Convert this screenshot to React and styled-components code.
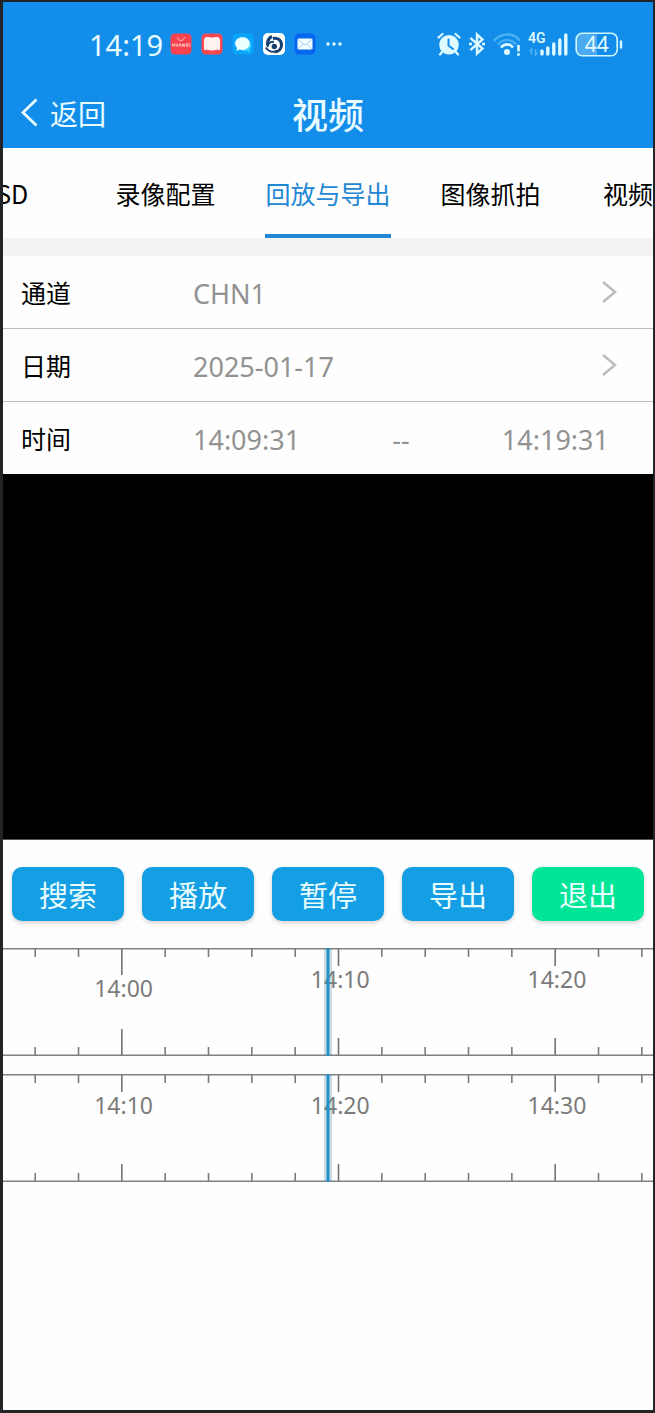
import React from "react";
import styled, { createGlobalStyle } from "styled-components";

const GlobalStyle = createGlobalStyle`
  * { box-sizing: border-box; }
  html, body, #root { height: 100%; }
  body {
    margin: 0;
    background: #222427;
    font-family: "Noto Sans", "Noto Sans CJK SC", sans-serif;
    color: #000;
  }
  button { font: inherit; color: inherit; border: 0; background: none; padding: 0; cursor: pointer; }
`;

const cjk = `"Noto Sans CJK SC", sans-serif`;

const Frame = styled.div`
  min-height: 100%;
  display: flex;
  flex-direction: column;
  padding: 2px 2px 3px 3px;
`;

const Screen = styled.div`
  flex: 1;
  background: #fefefe;
  overflow: hidden;
`;

const Header = styled.header`
  background: #128eea;
  color: #e9fbff;
`;

const StatusBar = styled.div`
  display: flex;
  align-items: center;
  justify-content: space-between;
  height: 84px;
  padding: 0 30px 0 86px;
`;

const StatusGroup = styled.div`
  display: flex;
  align-items: center;
  gap: ${(p) => p.$gap}px;
`;

const Clock = styled.span`
  margin-right: -2px;
  padding-top: 2px;
  font-size: 29px;
  line-height: 40px;
`;

const NavBar = styled.div`
  display: grid;
  grid-template-columns: 1fr auto 1fr;
  align-items: center;
  height: 62px;
  padding: 0 16px 8px;
  font-family: ${cjk};
`;

const BackButton = styled.button`
  display: flex;
  align-items: center;
  gap: 12px;
  font-size: 28px;
  line-height: 40px;
`;

const Title = styled.h1`
  margin: 0;
  font-size: 36px;
  line-height: 52px;
  font-weight: 500;
`;

const Tabs = styled.nav`
  display: grid;
  grid-template-columns: repeat(5, 25%);
  margin-left: -12.5%;
  width: 100%;
  height: 90px;
`;

const Tab = styled.button`
  display: flex;
  justify-content: ${(p) => (p.$cut ? "flex-end" : "center")};
  padding-right: ${(p) => (p.$cut ? "50%" : "0")};
  font-family: ${cjk};
  font-size: 25px;
  color: ${(p) => (p.$active ? "#1f87d3" : "#000")};
  white-space: nowrap;

  span {
    height: 90px;
    line-height: 90px;
    border-bottom: 4px solid ${(p) => (p.$active ? "#1f87d3" : "transparent")};
  }
`;

const Settings = styled.section`
  border-top: 18px solid #f3f3f3;
`;

const Row = styled.div`
  display: flex;
  align-items: center;
  height: ${(p) => (p.$last ? 72 : 73)}px;
  padding: 0 36px 0 18px;
  border-bottom: ${(p) => (p.$last ? "0" : "1px solid #bdbdbd")};
`;

const RowLabel = styled.span`
  width: 172px;
  font-family: ${cjk};
  font-size: 25px;
  line-height: 36px;
`;

const Value = styled.span`
  padding-top: 3px;
`;

const RowValue = styled.button`
  flex: 1;
  display: flex;
  align-items: center;
  justify-content: space-between;
  font-size: 27px;
  line-height: 38px;
  color: #929292;
`;

const TimeRange = styled.div`
  flex: 1;
  display: flex;
  align-items: center;
  justify-content: space-between;
  margin-right: 8px;
  padding-top: 3px;
  font-size: 27px;
  line-height: 38px;
  color: #929292;
`;

const Video = styled.div`
  height: 366px;
  background: #000;
  border-bottom: 1px solid #555;
`;

const Actions = styled.div`
  display: grid;
  grid-template-columns: repeat(5, 1fr);
  gap: 18px;
  padding: 27px 9px;
`;

const ActionButton = styled.button`
  height: 54px;
  border-radius: 10px;
  font-family: ${cjk};
  font-size: 29px;
  line-height: 54px;
  color: #e9fdff;
  background: ${(p) => (p.$exit ? "#00e696" : "#149fe4")};
  box-shadow: 0 2px 4px rgba(0, 0, 0, 0.18);
`;

const Timelines = styled.div`
  display: flex;
  flex-direction: column;
  gap: 18px;
`;

const Ruler = styled.svg`
  display: block;
  width: 100%;
  height: 108px;
  font-size: 23px;
  fill: #7b7b7b;
`;

function Timeline({ labels, tall }) {
  const ticks = Array.from({ length: 15 }, (_, i) => i);
  return (
    <Ruler role="img" aria-label={labels.join(" ")}>
      <rect x="0" y="0" width="100%" height="1.5" fill="#808080" />
      <rect x="0" y="106.5" width="100%" height="1.5" fill="#808080" />
      {ticks.map((i) => {
        const major = i % 5 === 2;
        const len = major ? (tall && i === 2 ? 26 : 17) : 8;
        const x = `${4.95 + (i * 100) / 15}%`;
        return (
          <g key={i} stroke={major ? "#737373" : "#7b7b7b"} strokeWidth="1.6">
            <line x1={x} x2={x} y1="1" y2={1 + len} />
            <line x1={x} x2={x} y1={107 - len} y2="107" />
          </g>
        );
      })}
      {labels.map((label, i) => (
        <text key={label} x={`${18.55 + (i * 100) / 3}%`} y={tall && i === 0 ? 49 : 40} textAnchor="middle">
          {label}
        </text>
      ))}
      <line x1="50%" x2="50%" y1="0" y2="108" stroke="#4a8fa8" strokeOpacity="0.3" strokeWidth="8" />
      <line x1="50%" x2="50%" y1="0" y2="108" stroke="#2491c8" strokeWidth="3" />
    </Ruler>
  );
}

const Chevron = () => (
  <svg width="16" height="24" viewBox="0 0 16 24" fill="none" stroke="#bcbcbc" strokeWidth="2.5" aria-hidden="true">
    <path d="M2 2l12 10L2 22" />
  </svg>
);

const StoreIcon = () => (
  <svg width="22" height="22" viewBox="0 0 22 22" aria-hidden="true">
    <rect x="0.5" y="0.5" width="21" height="21" rx="4.5" fill="#f8434e" />
    <path d="M7.5 4.2c.5 4.4 6.5 4.4 7 0" fill="none" stroke="#ffc5c2" strokeWidth="1" />
    <path d="M2.5 10.500v3M4.300 10.500v3M2.500 12h2M6 10.500v2.500h1.700v-2.500M9 13.500l1-3 1 3M12 10.500l.8 3 .8-2.500.8 2.500.8-3M18.500 10.700h-1.800v2.600h1.800M16.700 12h1.500M19.800 10.500v3" fill="none" stroke="#ffd9d5" strokeWidth=".8" />
  </svg>
);

const BookIcon = () => (
  <svg width="22" height="22" viewBox="0 0 22 22" aria-hidden="true">
    <rect x="0.5" y="0.5" width="21" height="21" rx="4.5" fill="#fa4851" />
    <path d="M3 6l1-.5V4.500c2.500-.8 5-.6 7 .3 2-.9 4.500-1.100 7-.3v1l1 .5v11c-2.800-.3-5-.1-6.500.5h-3C8 16.900 5.800 16.700 3 17z" fill="#fff2ef" />
  </svg>
);

const ChatIcon = () => (
  <svg width="22" height="22" viewBox="0 0 22 22" aria-hidden="true">
    <rect x="0.5" y="0.5" width="21" height="21" rx="4.5" fill="#08a5fa" />
    <path d="M15 7c5 2 5 8 2.300 9.500l1 3-3.500-1.700H10z" fill="#35d4ff" />
    <path d="M10.500 4.200c4.300 0 7.300 2.700 7.300 6.300s-3 6.400-7.300 6.400c-1 0-2-.2-2.900-.5L4.500 18l.5-3.200c-1.200-1.200-1.900-2.700-1.900-4.300 0-3.600 3.100-6.300 7.400-6.300z" fill="#edffff" />
  </svg>
);

const SwirlIcon = () => (
  <svg width="22" height="22" viewBox="0 0 22 22" aria-hidden="true">
    <rect width="22" height="22" rx="5" fill="#fff" />
    <path d="M9 3.500C5.500 5 4.200 8 4.500 12.500" fill="none" stroke="#173f70" strokeWidth="3" />
    <path d="M10 5.500c5-1 8.500 2 8.500 6.500 0 4-3 6.800-7 6.800" fill="none" stroke="#173f70" strokeWidth="3" />
    <path d="M2.800 14.500c2 3 5 4.800 9 4.200" fill="none" stroke="#173f70" strokeWidth="2" />
    <path d="M4.500 14c.5-3.500 3-5.500 6.500-5.200" fill="none" stroke="#173f70" strokeWidth="1.800" />
    <circle cx="11.300" cy="13.500" r="2.700" fill="#173f70" />
  </svg>
);

const MailIcon = () => (
  <svg width="22" height="22" viewBox="0 0 22 22" aria-hidden="true">
    <rect x="0.5" y="0.5" width="21" height="21" rx="4.5" fill="#0666ed" />
    <rect x="3.500" y="5.500" width="15" height="11" rx="1.200" fill="#f3ffff" />
    <path d="M4 6.500l7 5.500 7-5.500M4 16l5-5M18 16l-5-5" fill="none" stroke="#a9cff4" strokeWidth="1" />
  </svg>
);

const MoreDots = () => (
  <svg width="18" height="6" viewBox="0 0 18 6" fill="#e0fbff" aria-hidden="true">
    <circle cx="3" cy="3" r="1.700" />
    <circle cx="9" cy="3" r="1.700" />
    <circle cx="15" cy="3" r="1.700" />
  </svg>
);

const AlarmIcon = () => (
  <svg width="24" height="24" viewBox="0 0 24 24" aria-hidden="true">
    <circle cx="12" cy="12.700" r="9.800" fill="#dcfaff" />
    <path d="M1.500 5.500l4-3.500M22.500 5.500l-4-3.500M5.500 19.500L3 22.500M18.500 19.500l2.500 3" stroke="#dcfaff" strokeWidth="2.200" strokeLinecap="round" />
    <path d="M11.500 7.500v6l4.500 3.500" fill="none" stroke="#158aeb" strokeWidth="2" strokeLinecap="round" />
  </svg>
);

const BluetoothIcon = () => (
  <svg width="18" height="24" viewBox="0 0 18 24" fill="none" stroke="#dcfaff" strokeWidth="2.400" aria-hidden="true">
    <path d="M2.500 6l12 10.500-5.500 5V2.500l5.500 5-12 10.500" />
    <path d="M1 12h3M14 12h3" />
  </svg>
);

const WifiIcon = () => (
  <svg width="28" height="24" viewBox="0 0 28 24" fill="none" aria-hidden="true">
    <path d="M1 8.800c7-8.500 19.500-8.500 26 0" stroke="#4bb1f4" strokeWidth="2.600" />
    <path d="M4.800 12.500c5.200-6 13.400-6 18.400 0" stroke="#4bb1f4" strokeWidth="2.200" />
    <path d="M8 15.500c3.300-4.200 8.700-4.200 12 0" stroke="#dcfaff" strokeWidth="2.600" />
    <circle cx="14" cy="20" r="3" fill="#dcfaff" />
    <path d="M25.500 13v6.500M25.500 21.200v2.600" stroke="#dcfaff" strokeWidth="2.600" />
  </svg>
);

const SignalIcon = () => (
  <svg width="40" height="28" viewBox="0 -3 40 28" aria-hidden="true">
    <text x="0" y="10" fontSize="14" fontWeight="600" fontFamily="Roboto, sans-serif" fill="#dcfaff">4G</text>
    <path d="M3.500 22v-6l-2 2.500M7.500 16v6l2-2.500" fill="none" stroke="#4bb1f4" strokeWidth="1.600" />
    <path d="M14 18v3M19.800 15v6M25.800 11v10M31.800 7v14M37.800 2v19" stroke="#dcfaff" strokeWidth="3.400" strokeLinecap="round" />
  </svg>
);

const BatteryIcon = () => (
  <svg width="48" height="25" viewBox="0 0 48 25" aria-hidden="true">
    <path d="M6 2h16v21H6a4.500 4.500 0 0 1-4.500-4.500v-12A4.500 4.500 0 0 1 6 2z" fill="#4baaf0" />
    <rect x="1.200" y="1.200" width="41" height="22.500" rx="6" fill="none" stroke="#d1f7ff" strokeWidth="1.600" />
    <path d="M46 9.500v6" stroke="#d1f7ff" strokeWidth="2.400" strokeLinecap="round" />
    <text x="21.700" y="20" fontSize="21" textAnchor="middle" fill="#e4fbff">44</text>
  </svg>
);

const BackArrow = () => (
  <svg width="19" height="30" viewBox="0 0 19 30" fill="none" stroke="#e9fbff" strokeWidth="2.800" aria-hidden="true">
    <path d="M17.500 1.500L4 14.500l13.500 13" />
  </svg>
);

const tabs = [
  { text: "OSD" },
  { text: "录像配置" },
  { text: "回放与导出", active: true },
  { text: "图像抓拍" },
  { text: "视频", cut: true },
];

const actions = ["搜索", "播放", "暂停", "导出", "退出"];

export default function App() {
  return (
    <Frame>
      <GlobalStyle />
      <Screen>
        <Header>
          <StatusBar>
            <StatusGroup $gap={9}>
              <Clock>14:19</Clock>
              <StoreIcon />
              <BookIcon />
              <ChatIcon />
              <SwirlIcon />
              <MailIcon />
              <MoreDots />
            </StatusGroup>
            <StatusGroup $gap={7}>
              <AlarmIcon />
              <BluetoothIcon />
              <WifiIcon />
              <SignalIcon />
              <BatteryIcon />
            </StatusGroup>
          </StatusBar>
          <NavBar>
            <BackButton>
              <BackArrow />
              返回
            </BackButton>
            <Title>视频</Title>
          </NavBar>
        </Header>
        <Tabs>
          {tabs.map((t) => (
            <Tab key={t.text} $active={t.active} $cut={t.cut}>
              <span>{t.text}</span>
            </Tab>
          ))}
        </Tabs>
        <Settings>
          <Row>
            <RowLabel id="channel">通道</RowLabel>
            <RowValue aria-describedby="channel">
              <Value>CHN1</Value>
              <Chevron />
            </RowValue>
          </Row>
          <Row>
            <RowLabel id="date">日期</RowLabel>
            <RowValue aria-describedby="date">
              <Value>2025-01-17</Value>
              <Chevron />
            </RowValue>
          </Row>
          <Row $last>
            <RowLabel id="time">时间</RowLabel>
            <TimeRange role="group" aria-labelledby="time">
              <button>14:09:31</button>
              <span>--</span>
              <button>14:19:31</button>
            </TimeRange>
          </Row>
        </Settings>
        <Video />
        <Actions>
          {actions.map((name) => (
            <ActionButton key={name} $exit={name === "退出"}>
              {name}
            </ActionButton>
          ))}
        </Actions>
        <Timelines>
          <Timeline labels={["14:00", "14:10", "14:20"]} tall />
          <Timeline labels={["14:10", "14:20", "14:30"]} />
        </Timelines>
      </Screen>
    </Frame>
  );
}
